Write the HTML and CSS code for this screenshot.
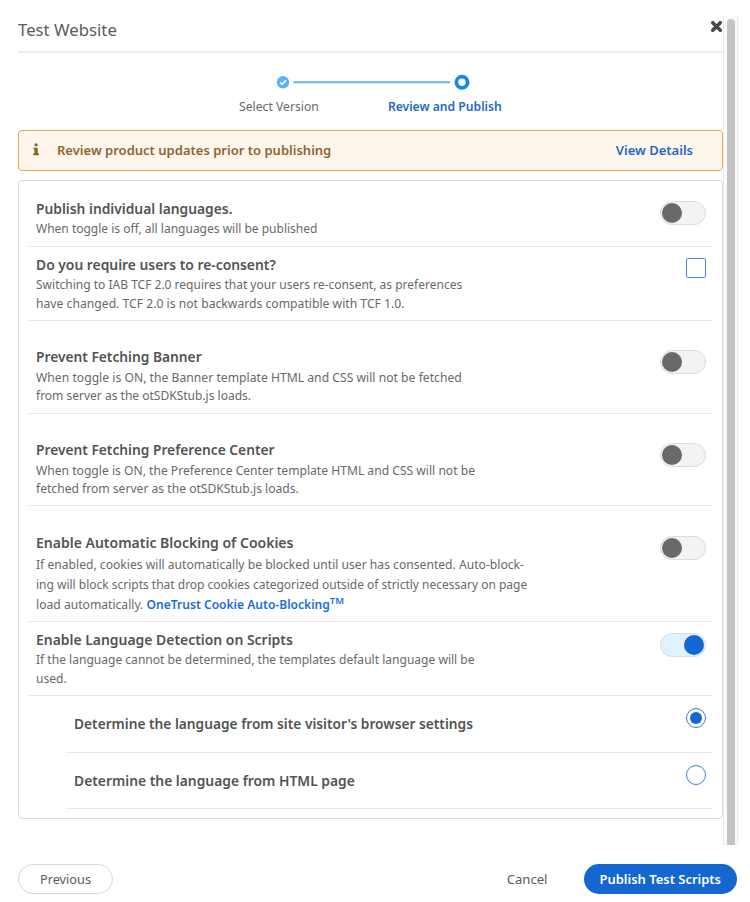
FILE: index.html
```html
<!DOCTYPE html>
<html lang="en">
<head>
<meta charset="utf-8">
<title>Test Website</title>
<link rel="stylesheet" href="styles.css">
</head>
<body>
<div class="dialog">
  <div class="scroll-area">
    <main class="content">
      <header class="header">
        <h1>Test Website</h1>
        <button class="close" aria-label="Close">
          <svg width="13" height="13" viewBox="0 0 13 13"><path d="M2.7 2.7 10.3 10.3M10.3 2.7 2.7 10.3" stroke="#484848" stroke-width="3.5" stroke-linecap="round"/></svg>
        </button>
      </header>

      <nav class="stepper">
        <svg class="track" width="196" height="16" viewBox="0 0 196 16">
          <circle cx="7" cy="8.3" r="6.2" fill="#5bb0ff"/>
          <path d="M4.2 8.4 6.2 10.3 9.9 6.4" fill="none" stroke="#fff" stroke-width="1.6"/>
          <path d="M17.3 8.3H174" stroke="#62b4ff" stroke-width="2"/>
          <circle cx="186" cy="8.3" r="5.6" fill="#fff" stroke="#1589ee" stroke-width="3.8"/>
        </svg>
        <div class="step-labels">
          <span>Select Version</span>
          <span class="current">Review and Publish</span>
        </div>
      </nav>

      <div class="notice">
        <svg class="info" width="8" height="13" viewBox="0 0 8 13" fill="#8c5f24"><rect x="1.7" y="0.6" width="2.8" height="2.6" rx=".6"/><path d="M.5 4.7h4.2v5.6H6v1.9H.3v-1.9h1.2V6.6h-1z"/></svg>
        <span class="notice-text">Review product updates prior to publishing</span>
        <a class="details">View Details</a>
      </div>

      <section class="card">
        <div class="row publish">
          <div class="copy"><h2>Publish individual languages.</h2><p>When toggle is off, all languages will be published</p></div>
          <span class="toggle"></span>
        </div>
        <div class="row consent">
          <div class="copy"><h2>Do you require users to re-consent?</h2><p>Switching to IAB TCF 2.0 requires that your users re-consent, as preferences<br><span class="wide">have changed. TCF 2.0 is not backwards compatible with TCF 1.0.</span></p></div>
          <span class="checkbox"></span>
        </div>
        <div class="row banner">
          <div class="copy"><h2>Prevent Fetching Banner</h2><p><span class="wide">When toggle is ON, the Banner template HTML and CSS will not be fetched</span><br>from server as the otSDKStub.js loads.</p></div>
          <span class="toggle"></span>
        </div>
        <div class="row center">
          <div class="copy"><h2>Prevent Fetching Preference Center</h2><p>When toggle is ON, the Preference Center template HTML and CSS will not be<br>fetched from server as the otSDKStub.js loads.</p></div>
          <span class="toggle"></span>
        </div>
        <div class="row blocking">
          <div class="copy"><h2>Enable Automatic Blocking of Cookies</h2><p>If enabled, cookies will automatically be blocked until user has consented. Auto-block-<br><span class="tight">ing will block scripts that drop cookies categorized outside of strictly necessary on page</span><br>load automatically. <a>OneTrust Cookie Auto-Blocking<sup>TM</sup></a></p></div>
          <span class="toggle"></span>
        </div>
        <div class="row detection">
          <div class="copy"><h2>Enable Language Detection on Scripts</h2><p>If the language cannot be determined, the templates default language will be<br>used.</p></div>
          <span class="toggle on"></span>
        </div>
        <div class="row option browser">
          <div class="copy"><h2>Determine the language from site visitor's browser settings</h2></div>
          <span class="radio checked"></span>
        </div>
        <div class="row option html">
          <div class="copy"><h2>Determine the language from HTML page</h2></div>
          <span class="radio"></span>
        </div>
      </section>
    </main>
    <div class="scrollbar"><div class="thumb"></div></div>
  </div>

  <footer class="footer">
    <button class="btn previous">Previous</button>
    <button class="btn cancel">Cancel</button>
    <button class="btn primary">Publish Test Scripts</button>
  </footer>
</div>
</body>
</html>
```

FILE: styles.css
```css
* { box-sizing: border-box; }
body { margin: 0; background: #fff; color: #696969; font-family: "Noto Sans", sans-serif; }
h1, h2, p { margin: 0; }
button { font-family: inherit; border: 0; background: none; padding: 0; }
svg { display: block; }

.dialog { width: 750px; height: 902px; padding-top: 16px; overflow: hidden; }
.scroll-area { display: flex; height: 829px; }
.content { width: 723px; padding-left: 18px; }

.header { display: flex; justify-content: space-between; height: 37px; border-bottom: 2px solid #ececec; }
.header h1 { font-size: 16.75px; font-weight: 400; line-height: 26px; color: #5c5c5c; padding-top: 1px; }
.close { width: 13px; height: 13px; margin-top: 3.5px; }

.stepper { height: 77px; padding-top: 21px; }
.track { margin-left: 257.5px; }
.step-labels { display: flex; gap: 69px; padding-left: 221px; margin-top: 7.5px; font-size: 12.2px; line-height: 18px; white-space: nowrap; }
.step-labels .current { font-weight: 600; font-size: 12.15px; color: #1f69c9; }

.notice { display: flex; align-items: center; height: 41px; padding: 0 29px 2px 14px; border: 1.5px solid #e8a855; border-radius: 4px; background: #fff6ec; font-size: 13.03px; font-weight: 600; }
.info { margin-right: 16px; }
.notice-text { color: #8c6532; }
.details { margin-left: auto; color: #1f69c9; }

.card { margin-top: 9px; height: 639px; border: 1.5px solid #dcdcdc; border-radius: 4px; padding: 0 9px; }
.row { display: flex; justify-content: space-between; padding: 0 7.5px 0 8px; border-bottom: 1.5px solid #e9e9e9; }
.copy { white-space: nowrap; }
.row h2 { font-size: 13.85px; font-weight: 600; line-height: 20px; color: #535353; }
.row p { margin-top: 1px; font-size: 12.03px; line-height: 18.6px; }
.wide { font-size: 12.18px; }

.publish { height: 66px; padding-top: 18px; }
.publish h2 { font-size: 13.82px; }
.row.publish p { font-size: 12px; }
.publish .toggle { margin-top: 2px; }
.consent { height: 74px; padding-top: 8px; }
.checkbox { width: 20px; height: 20px; margin-top: 3px; border: 1.5px solid #4584d8; border-radius: 2px; }
.banner { height: 93px; padding-top: 26px; }
.banner h2 { font-size: 13.75px; }
.row.banner p { margin-top: 2px; line-height: 18.3px; }
.banner .toggle, .center .toggle, .blocking .toggle { margin-top: 3px; }
.center { height: 92px; padding-top: 26px; }
.center h2 { font-size: 13.75px; }
.row.center p { margin-top: 1.5px; font-size: 12.12px; }
.blocking { height: 116px; padding-top: 27px; }
.blocking h2 { font-size: 14px; }
.row.blocking p { margin-top: 2px; font-size: 12.13px; line-height: 19.8px; }
.blocking .tight { font-size: 11.99px; }
.blocking a { color: #1d6ddb; font-weight: 600; font-size: 12.07px; }
sup { font-size: 9.5px; line-height: 0; vertical-align: 5.5px; }
.detection { height: 74px; padding-top: 8px; }
.detection h2 { font-size: 13.93px; }
.row.detection p { font-size: 12.05px; }
.detection .toggle { margin-top: 3px; }
.option { margin-left: 38px; height: 56.5px; padding-top: 18px; padding-left: 8px; }
.browser h2 { font-size: 13.72px; }

.toggle { width: 46px; height: 24px; border: 1.5px solid #dcdcdc; border-radius: 12px; background: #f3f3f3; padding: 1px; }
.toggle::before { content: ""; display: block; width: 20px; height: 20px; border-radius: 50%; background: #696969; }
.toggle.on { background: #e0f2ff; }
.toggle.on::before { background: #1467d0; margin-left: auto; }
.radio { width: 20px; height: 20px; margin-top: -6px; border: 1.5px solid #3b7dd8; border-radius: 50%; padding: 3px; }
.radio.checked::before { content: ""; display: block; width: 12px; height: 12px; border-radius: 50%; background: #1467d0; }

.scrollbar { width: 15px; background: #fafafa; border: solid #ededed; border-width: 0 1px; padding: 3px 0 0 3px; }
.thumb { width: 8px; height: 826px; border-radius: 4px 4px 0 0; background: #c4c4c4; }

.footer { display: flex; align-items: center; margin-top: 19px; padding: 0 13px 0 18px; }
.btn { height: 30px; border-radius: 15px; font-size: 13px; line-height: 18px; color: #5c5c5c; white-space: nowrap; }
.previous { width: 95px; font-size: 12.72px; border: 1px solid #d8d8d8; }
.cancel { margin-left: auto; margin-right: 36px; font-size: 13.1px; }
.primary { width: 153.5px; background: #1467d0; color: #fff; font-weight: 600; font-size: 12.96px; }
```
